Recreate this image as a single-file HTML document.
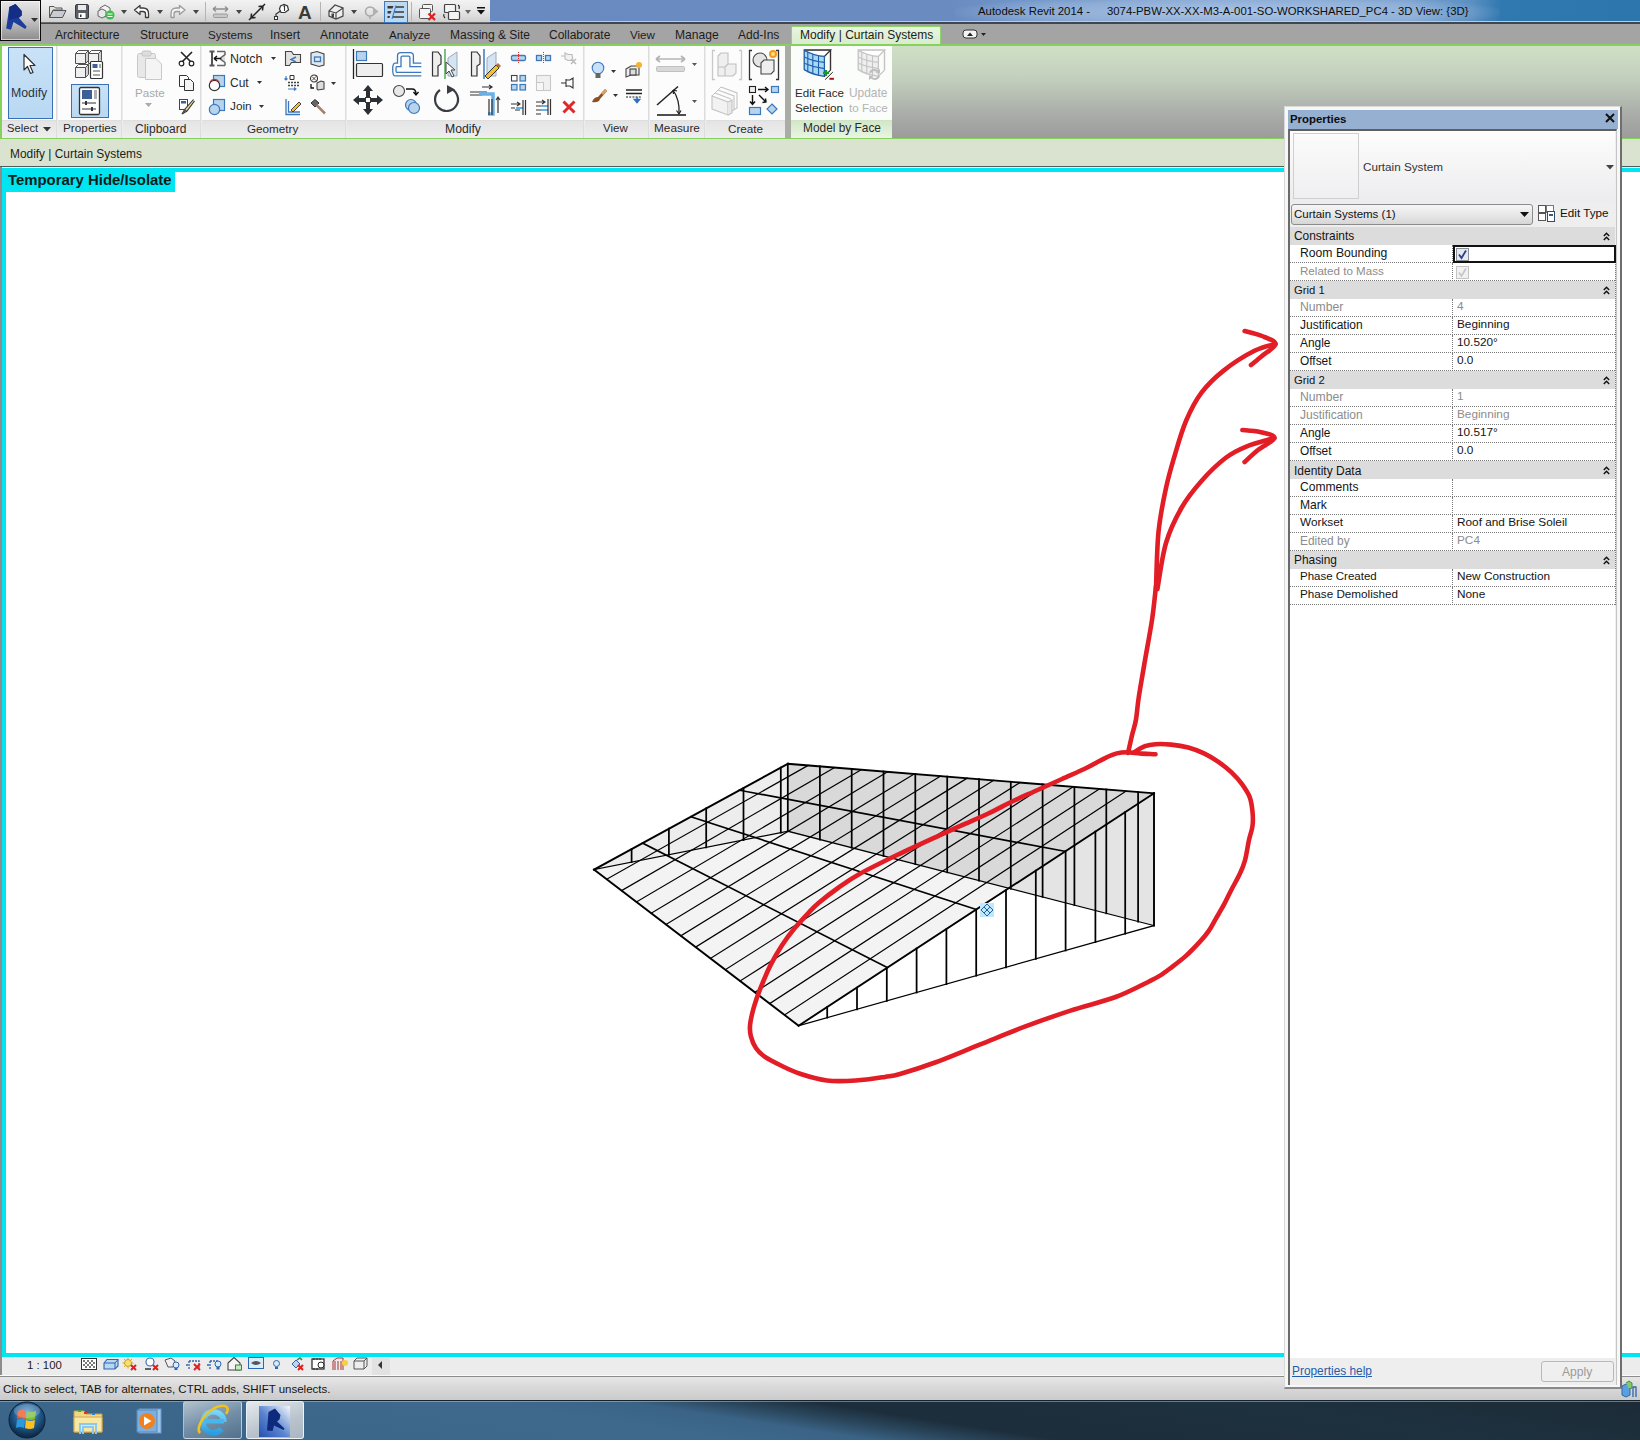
<!DOCTYPE html>
<html><head><meta charset="utf-8">
<style>
*{margin:0;padding:0;box-sizing:border-box}
html,body{width:1640px;height:1450px;overflow:hidden;background:#fff;font-family:"Liberation Sans",sans-serif;position:relative}
.a{position:absolute}
.t{position:absolute;white-space:nowrap;font-size:11.8px;color:#1c1c1c;line-height:1}
.g{color:#8a8a8a}
.pt{position:absolute;white-space:nowrap;font-size:11.8px;color:#2a2a2a;line-height:1}
svg{position:absolute;overflow:visible}
.row{position:absolute;left:1290px;width:325px;height:18px;border-bottom:1px dotted #7a7a7a}
.hdr{position:absolute;left:1290px;width:325px;height:18px;background:#dcdcdc}
.cv{position:absolute;left:1452px;width:1px;height:18px;border-left:1px dotted #7a7a7a}
</style></head><body>
<!-- ===== title bar ===== -->
<div class="a" style="left:0;top:0;width:1640px;height:22px;background:linear-gradient(90deg,#6486bf 0,#6a8bc1 40%,#6a8bc0 58%,#7095c8 62%,#7aa0cf 86%,#5a8fc2 89.8%,#3079b0 91.5%,#2c76ad 100%)"></div>
<div class="a" style="left:955px;top:0;width:545px;height:22px;background:radial-gradient(ellipse 52% 80% at 50% 55%,rgba(215,230,248,.55),rgba(215,230,248,.25) 70%,rgba(215,230,248,0))"></div>
<div class="a" style="left:0;top:21px;width:1640px;height:1px;background:#b8cbe6"></div>
<div class="a" style="left:0;top:22px;width:1640px;height:2px;background:#3d4651"></div>
<div class="t" style="left:978px;top:6px;font-size:11.4px;color:#0e0e0e">Autodesk Revit 2014 -</div>
<div class="t" style="left:1107px;top:6px;font-size:11.35px;color:#0e0e0e">3074-PBW-XX-XX-M3-A-001-SO-WORKSHARED_PC4 - 3D View: {3D}</div>
<!-- QAT -->
<div class="a" style="left:40px;top:0;width:450px;height:23px;background:linear-gradient(#f3f3f3,#e6e6e6 50%,#cfcfcf);border-bottom:1px solid #6c6c6c"></div>
<div class="a" style="left:205px;top:2px;width:1px;height:19px;background:#b4b4b4"></div>
<div class="a" style="left:320px;top:2px;width:1px;height:19px;background:#b4b4b4"></div>
<div class="a" style="left:411px;top:2px;width:1px;height:19px;background:#b4b4b4"></div>
<div class="a" style="left:384px;top:1px;width:24px;height:22px;background:#bcd9f3;border:1px solid #3d79bd"></div>
<!-- ===== tab row ===== -->
<div class="a" style="left:0;top:24px;width:1640px;height:21px;background:#a4a4a4"></div>
<div class="t" style="left:55px;top:29px;font-size:12.1px">Architecture</div>
<div class="t" style="left:140px;top:29px;font-size:12px">Structure</div>
<div class="t" style="left:208px;top:29px;font-size:11.6px">Systems</div>
<div class="t" style="left:270px;top:29px;font-size:12px">Insert</div>
<div class="t" style="left:320px;top:29px;font-size:12.2px">Annotate</div>
<div class="t" style="left:389px;top:29px;font-size:11.6px">Analyze</div>
<div class="t" style="left:450px;top:29px;font-size:12px">Massing &amp; Site</div>
<div class="t" style="left:549px;top:29px;font-size:12px">Collaborate</div>
<div class="t" style="left:630px;top:29px;font-size:11.6px">View</div>
<div class="t" style="left:675px;top:29px;font-size:12.1px">Manage</div>
<div class="t" style="left:738px;top:29px;font-size:12px">Add-Ins</div>
<div class="a" style="left:791px;top:26px;width:150px;height:20px;background:linear-gradient(#e9f5e2,#d6ecca);border:1px solid #8fd46b;border-bottom:none;border-radius:2px 2px 0 0"></div>
<div class="t" style="left:800px;top:29px;font-size:12px">Modify | Curtain Systems</div>
<svg style="left:962px;top:29px" width="30" height="12"><rect x="1" y="1" width="14" height="8" rx="3" fill="#f4f4f4" stroke="#333" stroke-width="1"/><path d="M5,7 L8,3.5 L11,7Z" fill="#222"/><path d="M19,4 L24,4 L21.5,7Z" fill="#222"/></svg>
<!-- ===== ribbon ===== -->
<div class="a" style="left:0;top:44px;width:1640px;height:2px;background:#86d05e"></div>
<div class="a" style="left:0;top:46px;width:1640px;height:92px;background:linear-gradient(#cfe0c6 0%,#c3cfbd 35%,#a9aca8 75%,#9c9c9c 100%)"></div>
<div class="a" style="left:0;top:46px;width:791px;height:92px;background:#fcfcfc"></div>
<div class="a" style="left:0;top:45px;width:2px;height:94px;background:#86d05e"></div>
<div class="a" style="left:0;top:120px;width:785px;height:18px;background:linear-gradient(#e4e4e4,#eeeeee);border-top:1px solid #dedede"></div>
<div class="a" style="left:785px;top:46px;width:6px;height:92px;background:#a9ada6"></div>
<div class="a" style="left:791px;top:46px;width:101px;height:92px;background:#fbfdfa"></div>
<div class="a" style="left:791px;top:120px;width:101px;height:18px;background:linear-gradient(#d2e7c8,#e9f5e2);border-top:1px solid #cfe3c5"></div>
<!-- separators -->
<div class="a" style="left:56px;top:46px;width:2px;height:92px;background:linear-gradient(90deg,#d5d5d5,#f4f4f4)"></div>
<div class="a" style="left:121px;top:46px;width:2px;height:92px;background:linear-gradient(90deg,#d5d5d5,#f4f4f4)"></div>
<div class="a" style="left:200px;top:46px;width:2px;height:92px;background:linear-gradient(90deg,#d5d5d5,#f4f4f4)"></div>
<div class="a" style="left:345px;top:46px;width:2px;height:92px;background:linear-gradient(90deg,#d5d5d5,#f4f4f4)"></div>
<div class="a" style="left:583px;top:46px;width:2px;height:92px;background:linear-gradient(90deg,#d5d5d5,#f4f4f4)"></div>
<div class="a" style="left:648px;top:46px;width:2px;height:92px;background:linear-gradient(90deg,#d5d5d5,#f4f4f4)"></div>
<div class="a" style="left:704px;top:46px;width:2px;height:92px;background:linear-gradient(90deg,#d5d5d5,#f4f4f4)"></div>
<div class="a" style="left:0;top:138px;width:1640px;height:1px;background:#86d05e"></div>
<div class="a" style="left:0;top:45px;width:2px;height:94px;background:#86d05e"></div>
<!-- panel titles -->
<div class="t" style="left:7px;top:123px;font-size:11.2px;color:#2a2a2a">Select</div>
<svg style="left:43px;top:127px" width="8" height="5"><path d="M0,0 L8,0 L4,4.5Z" fill="#333"/></svg>
<div class="t" style="left:63px;top:123px;font-size:11.8px;color:#2a2a2a">Properties</div>
<div class="t" style="left:135px;top:123px;font-size:12px;color:#2a2a2a">Clipboard</div>
<div class="t" style="left:247px;top:123px;font-size:11.7px;color:#2a2a2a">Geometry</div>
<div class="t" style="left:445px;top:123px;font-size:12.2px;color:#2a2a2a">Modify</div>
<div class="t" style="left:603px;top:123px;font-size:11.5px;color:#2a2a2a">View</div>
<div class="t" style="left:654px;top:123px;font-size:11.8px;color:#2a2a2a">Measure</div>
<div class="t" style="left:728px;top:123px;font-size:11.7px;color:#2a2a2a">Create</div>
<div class="t" style="left:803px;top:123px;font-size:11.9px;color:#2a2a2a">Model by Face</div>
<!-- button labels -->
<div class="a" style="left:8px;top:47px;width:45px;height:72px;background:linear-gradient(#c9e2f7,#b9d8f2);border:1px solid #3a70b6"></div>
<div class="t" style="left:11px;top:87px;font-size:12.3px;color:#2a3440">Modify</div>
<div class="a" style="left:71px;top:84px;width:38px;height:34px;background:linear-gradient(#c9e2f7,#b9d8f2);border:1px solid #3a70b6"></div>
<div class="t g" style="left:135px;top:87px;font-size:11.6px;color:#a9a9a9">Paste</div>
<div class="t" style="left:230px;top:53px;font-size:12.4px;color:#2a2a2a">Notch</div>
<div class="t" style="left:230px;top:77px;font-size:12px;color:#2a2a2a">Cut</div>
<div class="t" style="left:230px;top:101px;font-size:11.8px;color:#2a2a2a">Join</div>
<div class="t" style="left:795px;top:87px;font-size:11.6px;color:#2a2a2a">Edit Face</div>
<div class="t" style="left:795px;top:102px;font-size:11.7px;color:#2a2a2a">Selection</div>
<div class="t" style="left:849px;top:88px;font-size:11.9px;color:#b4b4b4">Update</div>
<div class="t" style="left:849px;top:102px;font-size:11.6px;color:#b4b4b4">to Face</div>
<!-- ===== options bar ===== -->
<div class="a" style="left:0;top:139px;width:1640px;height:28px;background:#d9e3d0"></div>
<div class="a" style="left:0;top:166px;width:1640px;height:2px;background:#4e5c5c"></div>
<div class="t" style="left:10px;top:149px;font-size:11.9px;color:#1c1c1c">Modify | Curtain Systems</div>
<!-- ===== view ===== -->
<div class="a" style="left:0;top:167px;width:1640px;height:209px;background:#f0f0f0"></div>
<div class="a" style="left:0;top:1340px;width:1640px;height:36px;background:#ececec"></div>
<div class="a" style="left:0;top:167px;width:2px;height:1208px;background:#8c8c8c"></div>
<div class="a" style="left:2px;top:168px;width:1638px;height:1189px;background:#00e5f2"></div>
<div class="a" style="left:6px;top:172px;width:1634px;height:1181px;background:#fff"></div>
<div class="a" style="left:6px;top:172px;width:169px;height:20px;background:#00e5f2"></div>
<div class="t" style="left:8px;top:173px;font-weight:bold;font-size:14.9px;color:#0c1a1a">Temporary Hide/Isolate</div>
<!-- view control bar -->
<div class="t" style="left:27px;top:1360px;font-size:11.4px;color:#1c1c1c">1 : 100</div>
<div class="a" style="left:372px;top:1358px;width:18px;height:17px;background:#e2e2e2"></div>
<!-- status bar -->
<div class="a" style="left:0;top:1375px;width:1640px;height:1px;background:#fafafa"></div><div class="a" style="left:0;top:1376px;width:1640px;height:24px;background:linear-gradient(#e6e6e6,#dadada 40%,#cdcdcd 90%,#c9ccd0);border-top:1px solid #8c8c8c"></div>
<div class="t" style="left:3px;top:1384px;font-size:11.5px;color:#141414">Click to select, TAB for alternates, CTRL adds, SHIFT unselects.</div>
<!-- ===== taskbar ===== -->
<div class="a" style="left:0;top:1400px;width:1640px;height:40px;background:linear-gradient(8.75deg,#3a6588 0%,#3e698d 38%,#3a6386 46%,#2a465c 51%,#1c2d3b 56%,#1e313f 78%,#1c2b37 100%)"></div>
<div class="a" style="left:0;top:1400px;width:1640px;height:1px;background:#16222c"></div>
<div class="a" style="left:0;top:1401px;width:1640px;height:1px;background:rgba(190,215,235,.45)"></div>
<div class="a" style="left:183px;top:1401px;width:59px;height:38px;border:1px solid rgba(220,235,250,.6);border-radius:3px;background:linear-gradient(160deg,#b4c2ce,#7490a8 50%,#52708c)"></div>
<div class="a" style="left:246px;top:1401px;width:58px;height:38px;border:1px solid rgba(240,245,252,.9);border-radius:3px;background:linear-gradient(160deg,#e6eaee,#b9c3cc 60%,#a9b6c2)"></div>

<svg class="a" style="left:0;top:0" width="1640" height="1450" viewBox="0 0 1640 1450">
<polygon points="594.0,869.6 798.6,1025.7 1154.0,793.3 787.8,763.8" fill="#f3f3f3"/>
<polygon points="787.8,763.8 1154.0,793.3 1154.0,925.6 787.8,831.2" fill="#d9d9d9"/>
<polygon points="594.0,869.6 787.8,763.8 787.8,831.2" fill="#ededed"/>
<polygon points="798.6,1025.7 1154.0,793.3 1154.0,925.6" fill="#ffffff" fill-opacity="0.3"/>
<g stroke-linecap="square"><line x1="631.6" y1="849.1" x2="631.6" y2="862.1" stroke="#000" stroke-width="1.75"/><line x1="668.9" y1="828.7" x2="668.9" y2="854.8" stroke="#000" stroke-width="1.75"/><line x1="706.2" y1="808.3" x2="706.2" y2="847.4" stroke="#000" stroke-width="1.75"/><line x1="743.5" y1="788.0" x2="743.5" y2="840.0" stroke="#000" stroke-width="1.75"/><line x1="780.8" y1="767.6" x2="780.8" y2="832.6" stroke="#000" stroke-width="1.75"/><line x1="787.8" y1="763.8" x2="787.8" y2="831.2" stroke="#000" stroke-width="1.75"/><line x1="819.9" y1="766.4" x2="819.9" y2="839.5" stroke="#000" stroke-width="1.75"/><line x1="851.7" y1="768.9" x2="851.7" y2="847.7" stroke="#000" stroke-width="1.75"/><line x1="883.5" y1="771.5" x2="883.5" y2="855.9" stroke="#000" stroke-width="1.75"/><line x1="915.3" y1="774.1" x2="915.3" y2="864.1" stroke="#000" stroke-width="1.75"/><line x1="947.2" y1="776.6" x2="947.2" y2="872.3" stroke="#000" stroke-width="1.75"/><line x1="979.0" y1="779.2" x2="979.0" y2="880.5" stroke="#000" stroke-width="1.75"/><line x1="1010.8" y1="781.8" x2="1010.8" y2="888.7" stroke="#000" stroke-width="1.75"/><line x1="1042.6" y1="784.3" x2="1042.6" y2="896.9" stroke="#000" stroke-width="1.75"/><line x1="1074.4" y1="786.9" x2="1074.4" y2="905.1" stroke="#000" stroke-width="1.75"/><line x1="1106.3" y1="789.5" x2="1106.3" y2="913.3" stroke="#000" stroke-width="1.75"/><line x1="1138.1" y1="792.0" x2="1138.1" y2="921.5" stroke="#000" stroke-width="1.75"/><line x1="827.2" y1="1007.0" x2="827.2" y2="1017.6" stroke="#000" stroke-width="1.75"/><line x1="857.0" y1="987.5" x2="857.0" y2="1009.3" stroke="#000" stroke-width="1.75"/><line x1="886.8" y1="968.0" x2="886.8" y2="1000.9" stroke="#000" stroke-width="1.75"/><line x1="916.6" y1="948.5" x2="916.6" y2="992.5" stroke="#000" stroke-width="1.75"/><line x1="946.4" y1="929.1" x2="946.4" y2="984.1" stroke="#000" stroke-width="1.75"/><line x1="976.2" y1="909.6" x2="976.2" y2="975.7" stroke="#000" stroke-width="1.75"/><line x1="1006.0" y1="890.1" x2="1006.0" y2="967.3" stroke="#000" stroke-width="1.75"/><line x1="1035.8" y1="870.6" x2="1035.8" y2="958.9" stroke="#000" stroke-width="1.75"/><line x1="1065.6" y1="851.1" x2="1065.6" y2="950.5" stroke="#000" stroke-width="1.75"/><line x1="1095.4" y1="831.6" x2="1095.4" y2="942.1" stroke="#000" stroke-width="1.75"/><line x1="1125.2" y1="812.1" x2="1125.2" y2="933.7" stroke="#000" stroke-width="1.75"/><line x1="594.0" y1="869.6" x2="787.8" y2="831.2" stroke="#000" stroke-width="1.2"/><line x1="787.8" y1="831.2" x2="1154.0" y2="925.6" stroke="#000" stroke-width="1.2"/><line x1="606.7" y1="879.3" x2="808.1" y2="765.4" stroke="#000" stroke-width="1.2"/><line x1="621.6" y1="890.6" x2="834.6" y2="767.6" stroke="#000" stroke-width="1.2"/><line x1="636.4" y1="901.9" x2="861.1" y2="769.7" stroke="#000" stroke-width="1.2"/><line x1="651.2" y1="913.2" x2="887.6" y2="771.8" stroke="#000" stroke-width="1.2"/><line x1="666.0" y1="924.5" x2="914.1" y2="774.0" stroke="#000" stroke-width="1.2"/><line x1="680.8" y1="935.8" x2="940.6" y2="776.1" stroke="#000" stroke-width="1.2"/><line x1="695.6" y1="947.1" x2="967.1" y2="778.2" stroke="#000" stroke-width="1.2"/><line x1="710.4" y1="958.4" x2="993.6" y2="780.4" stroke="#000" stroke-width="1.2"/><line x1="725.3" y1="969.7" x2="1020.1" y2="782.5" stroke="#000" stroke-width="1.2"/><line x1="740.1" y1="981.0" x2="1046.6" y2="784.6" stroke="#000" stroke-width="1.2"/><line x1="754.9" y1="992.3" x2="1073.1" y2="786.8" stroke="#000" stroke-width="1.2"/><line x1="769.7" y1="1003.6" x2="1099.6" y2="788.9" stroke="#000" stroke-width="1.2"/><line x1="784.5" y1="1014.9" x2="1126.1" y2="791.1" stroke="#000" stroke-width="1.2"/><line x1="642.5" y1="843.1" x2="887.5" y2="967.6" stroke="#000" stroke-width="1.65"/><line x1="690.9" y1="816.7" x2="976.3" y2="909.5" stroke="#000" stroke-width="1.65"/><line x1="739.3" y1="790.2" x2="1065.2" y2="851.4" stroke="#000" stroke-width="1.65"/><line x1="594.0" y1="869.6" x2="787.8" y2="763.8" stroke="#000" stroke-width="1.9"/><line x1="787.8" y1="763.8" x2="1154.0" y2="793.3" stroke="#000" stroke-width="1.9"/><line x1="1154.0" y1="793.3" x2="1154.0" y2="925.6" stroke="#000" stroke-width="1.9"/><line x1="1154.0" y1="925.6" x2="798.6" y2="1025.7" stroke="#000" stroke-width="1.2"/><line x1="798.6" y1="1025.7" x2="594.0" y2="869.6" stroke="#000" stroke-width="1.9"/><line x1="798.6" y1="1025.7" x2="1154.0" y2="793.3" stroke="#000" stroke-width="1.9"/></g>
<g transform="translate(987,910) rotate(0)"><rect x="-7" y="-7" width="14" height="14" fill="#bfe9fb"/><path d="M0,-6 L6,0 L0,6 L-6,0 Z M-3,-3 L3,3 M3,-3 L-3,3" fill="none" stroke="#2060b0" stroke-width="1"/></g>
<path d="M1156.0,589.0 C1156.4,579.5 1156.8,548.8 1158.5,532.0 C1160.2,515.2 1163.2,500.9 1166.0,488.0 C1168.8,475.1 1171.7,465.7 1175.0,454.5 C1178.3,443.3 1181.6,431.3 1186.0,421.0 C1190.4,410.7 1195.2,401.1 1201.5,392.7 C1207.8,384.3 1214.8,377.6 1223.6,370.6 C1232.4,363.6 1245.8,355.2 1254.5,350.8 C1263.2,346.4 1272.0,345.1 1275.5,344.0" fill="none" stroke="#e21d26" stroke-width="4.6" stroke-linecap="round" stroke-linejoin="round"/>
<path d="M1244.6,331.0 C1247.5,331.8 1256.8,333.8 1262.0,336.0 C1267.2,338.2 1275.5,340.7 1275.5,344.0 C1275.5,347.3 1266.1,352.5 1262.0,356.0 C1257.9,359.5 1252.8,363.5 1251.0,365.0" fill="none" stroke="#e21d26" stroke-width="4.6" stroke-linecap="round" stroke-linejoin="round"/>
<path d="M1157.4,589.0 C1158.8,581.3 1162.0,556.6 1166.0,543.0 C1170.0,529.4 1175.8,517.8 1181.7,507.5 C1187.6,497.2 1194.2,489.3 1201.5,481.0 C1208.8,472.7 1218.4,463.5 1225.8,457.8 C1233.2,452.1 1237.6,450.1 1245.7,446.8 C1253.8,443.5 1269.6,439.5 1274.4,438.0" fill="none" stroke="#e21d26" stroke-width="4.6" stroke-linecap="round" stroke-linejoin="round"/>
<path d="M1242.4,430.0 C1245.3,430.3 1254.7,430.7 1260.0,432.0 C1265.3,433.3 1274.7,435.0 1274.4,438.0 C1274.1,441.0 1263.0,446.0 1258.0,450.0 C1253.0,454.0 1246.8,460.0 1244.6,462.0" fill="none" stroke="#e21d26" stroke-width="4.6" stroke-linecap="round" stroke-linejoin="round"/>
<path d="M1156.0,586.0 C1155.3,591.7 1154.0,606.7 1152.0,620.0 C1150.0,633.3 1146.2,652.8 1144.0,666.0 C1141.8,679.2 1139.8,690.0 1138.5,699.0 C1137.2,708.0 1137.0,713.9 1135.9,720.0 C1134.8,726.1 1133.2,730.2 1131.9,735.7 C1130.6,741.2 1128.7,750.1 1128.0,753.0" fill="none" stroke="#e21d26" stroke-width="4.6" stroke-linecap="round" stroke-linejoin="round"/>
<path d="M1134.5,752.0 C1136.2,751.0 1141.5,747.5 1145.0,746.2 C1148.5,744.9 1151.1,744.5 1155.5,744.2 C1159.9,743.9 1165.7,744.1 1171.2,744.6 C1176.7,745.1 1182.8,746.0 1188.3,747.5 C1193.8,749.0 1199.0,751.0 1204.0,753.4 C1209.0,755.8 1213.8,758.7 1218.4,761.9 C1223.0,765.1 1227.6,768.7 1231.5,772.4 C1235.4,776.1 1239.0,780.1 1242.0,784.2 C1245.0,788.4 1248.0,792.7 1249.8,797.3 C1251.5,801.9 1252.0,806.9 1252.5,811.7 C1253.0,816.5 1253.1,821.3 1252.5,826.0 C1251.9,830.7 1250.3,834.2 1249.0,840.0 C1247.7,845.8 1246.5,855.0 1244.9,860.7 C1243.4,866.4 1242.0,869.3 1239.7,874.1 C1237.5,878.9 1234.0,884.7 1231.4,889.7 C1228.8,894.7 1226.8,899.4 1224.2,904.2 C1221.6,909.0 1218.5,914.1 1215.9,918.6 C1213.3,923.1 1211.4,927.1 1208.6,931.1 C1205.8,935.1 1203.1,938.3 1199.3,942.4 C1195.5,946.5 1190.7,951.6 1185.9,955.9 C1181.1,960.2 1174.6,965.0 1170.3,968.3 C1166.0,971.6 1163.5,973.5 1160.0,975.6 C1156.5,977.8 1156.9,977.6 1149.5,981.2 C1142.1,984.8 1128.8,992.1 1115.6,997.0 C1102.4,1001.9 1085.5,1005.7 1070.5,1010.6 C1055.5,1015.5 1040.4,1020.8 1025.4,1026.4 C1010.4,1032.0 995.3,1038.4 980.3,1044.4 C965.2,1050.4 948.5,1057.6 935.1,1062.5 C921.7,1067.4 908.4,1071.6 900.0,1074.0 C891.6,1076.4 892.2,1075.8 884.8,1076.9 C877.4,1078.0 865.4,1079.9 855.8,1080.5 C846.1,1081.1 836.1,1081.6 826.9,1080.5 C817.7,1079.4 808.5,1076.5 800.8,1074.0 C793.1,1071.5 786.5,1068.2 780.5,1065.3 C774.5,1062.4 768.7,1059.6 764.6,1056.7 C760.5,1053.8 758.2,1051.4 755.9,1048.0 C753.6,1044.6 751.9,1040.3 750.9,1036.4 C749.9,1032.5 749.6,1029.6 750.1,1024.8 C750.6,1020.0 752.1,1013.4 753.8,1007.4 C755.5,1001.4 757.5,995.6 760.3,988.6 C763.1,981.6 766.8,972.6 770.4,965.4 C774.0,958.2 777.9,951.5 782.0,945.2 C786.1,938.9 790.6,933.1 795.0,927.8 C799.4,922.5 804.2,917.4 808.1,913.3 C812.0,909.2 813.5,907.2 818.5,903.0 C823.5,898.8 831.2,892.8 838.0,888.0 C844.8,883.2 849.7,879.5 859.5,874.0 C869.3,868.5 883.6,861.5 897.0,855.0 C910.4,848.5 928.8,840.2 940.0,835.1 C951.2,830.0 956.3,827.8 964.4,824.1 C972.5,820.5 980.7,817.1 988.8,813.2 C996.9,809.4 1005.1,804.9 1013.2,801.0 C1021.3,797.1 1029.5,793.7 1037.6,790.0 C1045.7,786.3 1053.9,782.7 1062.0,779.0 C1070.1,775.3 1079.2,771.5 1086.3,768.0 C1093.4,764.5 1099.5,760.7 1104.6,758.3 C1109.7,755.9 1113.1,754.4 1116.8,753.4 C1120.5,752.4 1122.7,752.2 1126.6,752.2 C1130.5,752.2 1135.2,753.0 1140.0,753.4 C1144.8,753.8 1152.9,754.1 1155.5,754.3" fill="none" stroke="#e21d26" stroke-width="4.6" stroke-linecap="round" stroke-linejoin="round"/>
</svg>
<!-- ===== R logo ===== -->
<div class="a" style="left:0;top:0;width:41px;height:41px;background:linear-gradient(#e6e6e6,#c8c8c8 45%,#8c8c8c);border:1px solid #0a0a0a;box-shadow:inset 0 0 0 1px rgba(255,255,255,.6)"></div>
<svg style="left:0;top:0" width="41" height="41"><path d="M9.3,7 L15.5,4 L21.7,11 L21.7,15.5 L18.8,17.8 L26.7,26.7 L25.2,29 L13.5,22 L11,29.8 L6.2,28.6 Z" fill="#1d3c9c"/><path d="M9.3,7 L15.5,4 L21.7,11 L21.7,15.5 L18.8,17.8 L13,19 L9,20Z" fill="#142e86"/><path d="M31,18 L38,18 L34.5,22Z" fill="#333"/></svg>
<!-- ===== QAT icons ===== -->
<svg style="left:48px;top:3px" width="20" height="17"><path d="M1.5,3.5 L6,3.5 L7.5,5 L14,5 L14,7 L5,7 L1.5,14.5Z" fill="#e4e4e4" stroke="#555" stroke-width="1"/><path d="M5,7.5 L18,7.5 L14.5,14.5 L1.5,14.5Z" fill="#c9cdd3" stroke="#555" stroke-width="1"/></svg>
<svg style="left:74px;top:3px" width="17" height="17"><rect x="1.5" y="1.5" width="13" height="14" rx="1.5" fill="#5a5f66" stroke="#3a3d42"/><rect x="4" y="2" width="8" height="5" fill="#e8eaee"/><rect x="4.5" y="10" width="7" height="5" fill="#fff"/><rect x="6" y="11.5" width="1.5" height="2.5" fill="#333"/></svg>
<svg style="left:97px;top:3px" width="20" height="18"><path d="M3,5 L8,2 L13,5 L13,11 L8,14 L3,11Z" fill="#f2f2f2" stroke="#666"/><path d="M1,8 L5,6 L9,8 L9,13 L5,15 L1,13Z" fill="#e9e9e9" stroke="#666"/><circle cx="13" cy="12" r="4.5" fill="#3bc04a"/><path d="M10.5,11 h5 M10.5,13.5 h5" stroke="#fff" stroke-width="1.2"/></svg>
<svg style="left:121px;top:10px" width="7" height="5"><path d="M0,0 L6,0 L3,4Z" fill="#444"/></svg>
<svg style="left:133px;top:4px" width="18" height="15"><path d="M1.5,6 L7,1.5 L7,4 L10,4 Q15.5,4 15.5,9.5 L15.5,13.5 L12.5,13.5 L12.5,10 Q12.5,7.5 10,7.5 L7,7.5 L7,10.5Z" fill="#fff" stroke="#3c3c3c" stroke-width="1.3" stroke-linejoin="round"/></svg>
<svg style="left:157px;top:10px" width="7" height="5"><path d="M0,0 L6,0 L3,4Z" fill="#444"/></svg>
<svg style="left:169px;top:4px" width="18" height="15"><path d="M16,6 L10.5,1.5 L10.5,4 L7.5,4 Q2,4 2,9.5 L2,13.5 L5,13.5 L5,10 Q5,7.5 7.5,7.5 L10.5,7.5 L10.5,10.5Z" fill="#f4f4f4" stroke="#9a9a9a" stroke-width="1.3" stroke-linejoin="round"/></svg>
<svg style="left:193px;top:10px" width="7" height="5"><path d="M0,0 L6,0 L3,4Z" fill="#444"/></svg>
<svg style="left:212px;top:5px" width="18" height="14"><path d="M1,4 L16,4 M1,4 L4,1.5 M1,4 L4,6.5 M16,4 L13,1.5 M16,4 L13,6.5" stroke="#8e8e8e" stroke-width="1.3" fill="none"/><rect x="1.5" y="9" width="14" height="3.5" rx="1" fill="#c8c8c8" stroke="#9a9a9a"/></svg>
<svg style="left:236px;top:10px" width="7" height="5"><path d="M0,0 L6,0 L3,4Z" fill="#444"/></svg>
<svg style="left:248px;top:3px" width="18" height="18"><path d="M3,15 L15,3 M3,15 L3.5,10.5 M3,15 L7.5,14.5 M15,3 L14.5,7.5 M15,3 L10.5,3.5 M1,17 L5,13 M13,5 L17,1" stroke="#222" stroke-width="1.5" fill="none"/></svg>
<svg style="left:273px;top:3px" width="17" height="17"><path d="M7.5,3 L11,1.5 L14.5,3 L15.5,7 L12,9.5 L8,9.5 L6.5,6Z" fill="#fff" stroke="#333" stroke-width="1.2"/><path d="M10.5,3.5 L11.5,3 L11.5,8" stroke="#333" stroke-width="1.1" fill="none"/><path d="M7.5,8 L3,11 L3,14.5" stroke="#333" stroke-width="1.2" fill="none"/><rect x="1.5" y="13.5" width="3" height="3" fill="#fff" stroke="#333"/></svg>
<div class="t" style="left:298px;top:3px;font-size:19px;font-weight:bold;color:#3a3a3a">A</div>
<svg style="left:327px;top:3px" width="18" height="17"><path d="M2,8 L8,2 L16,5 L16,13 L9,16 L2,13Z" fill="#eee" stroke="#444" stroke-width="1.2"/><path d="M2,8 L9,10 L16,5 M9,10 L9,16" stroke="#444" stroke-width="1.1" fill="none"/><rect x="4.5" y="10.5" width="2.5" height="4" fill="#444"/></svg>
<svg style="left:351px;top:10px" width="7" height="5"><path d="M0,0 L6,0 L3,4Z" fill="#444"/></svg>
<svg style="left:364px;top:4px" width="16" height="16"><circle cx="6" cy="7.5" r="4.5" fill="none" stroke="#a8a8a8" stroke-width="1.5"/><path d="M9,3 L14.5,7.5 L9,12Z" fill="#b0b0b0"/><path d="M6,12 L6,15" stroke="#a8a8a8" stroke-width="1.3"/></svg>
<svg style="left:386px;top:4px" width="20" height="16"><path d="M1.5,2 h6 l-1,2.5 h-5z M1.5,7 h4 l-1,2.5 h-3z M1.5,12 h2.5 l-0.5,2 h-2z" fill="#3a3a3a"/><path d="M10,1.5 L6,15" stroke="#3a7fd0" stroke-width="1.1"/><path d="M10,3 h8 M8.5,8 h9.5 M7,13 h11" stroke="#3a3a3a" stroke-width="1.3"/></svg>
<svg style="left:418px;top:3px" width="20" height="18"><rect x="4.5" y="1.5" width="10" height="7" rx="1" fill="#f4f4f4" stroke="#555"/><rect x="1.5" y="5.5" width="11" height="10" rx="1" fill="#f4f4f4" stroke="#555"/><path d="M10.5,10.5 L17,17 M17,10.5 L10.5,17" stroke="#e02020" stroke-width="2.2"/></svg>
<svg style="left:442px;top:3px" width="20" height="18"><rect x="2.5" y="1.5" width="11" height="8" rx="1" fill="#f4f4f4" stroke="#444" stroke-width="1.2"/><rect x="6.5" y="8.5" width="11" height="8" rx="1" fill="#f4f4f4" stroke="#444" stroke-width="1.2"/><path d="M16,2 Q18,3 17,6 M2,11 Q1,13 3,15" stroke="#222" stroke-width="1.1" fill="none"/></svg>
<svg style="left:465px;top:10px" width="7" height="5"><path d="M0,0 L6,0 L3,4Z" fill="#666"/></svg>
<svg style="left:477px;top:7px" width="9" height="9"><rect x="0" y="0" width="8" height="1.5" fill="#111"/><path d="M0,3 L8,3 L4,7.5Z" fill="#111"/></svg>

<!-- ===== ribbon icons ===== -->
<!-- Modify cursor -->
<svg style="left:22px;top:53px" width="16" height="24"><path d="M2,1.5 L2,17 L5.5,13.5 L8.5,20.5 L11,19.5 L8,12.5 L13,12.5Z" fill="#fff" stroke="#333" stroke-width="1.2" stroke-linejoin="round"/></svg>
<!-- Properties big icon -->
<svg style="left:74px;top:49px" width="32" height="32"><path d="M1.5,4.5 h10 v10 h-10z" fill="#efefef"/><path d="M1.5,4.5 l3,-3 h10 l-3,3z" fill="#fbfbfb"/><path d="M11.5,4.5 l3,-3 v10 l-3,3z" fill="#cfcfcf"/><path d="M1.5,4.5 l3,-3 h10 v10 l-3,3 h-10z M1.5,4.5 h10 l3,-3 M11.5,4.5 v10" fill="none" stroke="#505050" stroke-width="1"/><path d="M14.5,4.5 h10 v10 h-10z" fill="#efefef"/><path d="M14.5,4.5 l3,-3 h10 l-3,3z" fill="#fbfbfb"/><path d="M24.5,4.5 l3,-3 v10 l-3,3z" fill="#cfcfcf"/><path d="M14.5,4.5 l3,-3 h10 v10 l-3,3 h-10z M14.5,4.5 h10 l3,-3 M24.5,4.5 v10" fill="none" stroke="#505050" stroke-width="1"/><path d="M1.5,18.5 h10 v10 h-10z" fill="#efefef"/><path d="M1.5,18.5 l3,-3 h10 l-3,3z" fill="#fbfbfb"/><path d="M11.5,18.5 l3,-3 v10 l-3,3z" fill="#cfcfcf"/><path d="M1.5,18.5 l3,-3 h10 v10 l-3,3 h-10z M1.5,18.5 h10 l3,-3 M11.5,18.5 v10" fill="none" stroke="#505050" stroke-width="1"/><rect x="16.5" y="12.5" width="12" height="17" rx="1" fill="#fff" stroke="#333" stroke-width="1.2"/><rect x="18.5" y="15" width="5" height="4" fill="#3d6098"/><rect x="25" y="15" width="2" height="4" fill="#aaa"/><path d="M19,22 h7 M19,26 h7" stroke="#555" stroke-width="1"/></svg>
<svg style="left:77px;top:86px" width="26" height="30"><rect x="2.5" y="1.5" width="20" height="27" rx="1.5" fill="#fff" stroke="#333" stroke-width="1.3"/><rect x="5" y="4" width="10" height="9" fill="#3c5f97"/><rect x="17" y="4" width="3" height="9" fill="#b0b0b0"/><path d="M5,17 h14 M5,23 h14" stroke="#333" stroke-width="1.2"/><rect x="8" y="15" width="2" height="4" fill="#333"/><rect x="14" y="21" width="2" height="4" fill="#333"/></svg>
<!-- Paste -->
<svg style="left:136px;top:49px" width="28" height="33"><rect x="1.5" y="4.5" width="18" height="24" rx="2" fill="#e8e8e8" stroke="#c8c8c8"/><rect x="6" y="2" width="9" height="5" rx="1.5" fill="#ddd" stroke="#c4c4c4"/><path d="M9.5,9.5 L20,9.5 L25.5,15 L25.5,30.5 L9.5,30.5Z" fill="#f4f4f4" stroke="#c8c8c8"/></svg>
<svg style="left:145px;top:103px" width="8" height="5"><path d="M0,0 L7,0 L3.5,4Z" fill="#aaa"/></svg>
<!-- scissors / copy / match -->
<svg style="left:178px;top:50px" width="18" height="17"><path d="M3,2 L14,13 M14,2 L3,13" stroke="#222" stroke-width="1.6"/><circle cx="3.5" cy="13.5" r="2.3" fill="#fff" stroke="#222" stroke-width="1.2"/><circle cx="13.5" cy="13.5" r="2.3" fill="#fff" stroke="#222" stroke-width="1.2"/></svg>
<svg style="left:178px;top:74px" width="18" height="18"><path d="M1.5,1.5 h7 l2,2 v9 h-9z" fill="#fafafa" stroke="#333"/><path d="M6.5,5.5 h6 l3,3 v8 h-9z" fill="#f4f4f4" stroke="#333"/></svg>
<svg style="left:178px;top:98px" width="18" height="18"><rect x="1.5" y="1.5" width="8" height="10" fill="#fff" stroke="#444"/><rect x="3" y="3" width="5" height="2.5" fill="#3c5f97"/><path d="M15.5,1.5 L7,11 L4,16 L9,13 L16.5,3" fill="#e8d7a0" stroke="#333" stroke-width="1.1"/><path d="M4,16 L7,11 L9,13Z" fill="#555"/></svg>
<!-- Geometry: notch/cut/join -->
<svg style="left:208px;top:50px" width="19" height="17"><path d="M1.5,1.5 h5 M4,1.5 v14 M1.5,15.5 h5" stroke="#555" stroke-width="2" fill="none"/><path d="M9,1.5 h8 M17,1.5 v3 l-4,3 v2 l4,3 v3 M9,15.5 h8" stroke="#666" stroke-width="1.5" fill="#ddd"/><path d="M13,8.5 L6,8.5 M6,8.5 L9,6 M6,8.5 L9,11" stroke="#111" stroke-width="1.4" fill="none"/></svg>
<svg style="left:271px;top:57px" width="6" height="4"><path d="M0,0 L5,0 L2.5,3Z" fill="#333"/></svg>
<svg style="left:208px;top:74px" width="19" height="18"><rect x="5.5" y="1.5" width="11" height="11" fill="#b8d4ec" stroke="#3b78bd" stroke-width="1.2"/><circle cx="6.5" cy="11.5" r="5.2" fill="#fff" stroke="#333" stroke-width="1.2"/><path d="M2,8 A5.2,5.2 0 0 1 11,8" stroke="#e02020" stroke-width="1.2" fill="none"/></svg>
<svg style="left:257px;top:81px" width="6" height="4"><path d="M0,0 L5,0 L2.5,3Z" fill="#333"/></svg>
<svg style="left:208px;top:98px" width="19" height="18"><rect x="5.5" y="1.5" width="11" height="11" fill="#b8d4ec" stroke="#3b78bd" stroke-width="1.2"/><circle cx="6.5" cy="11.5" r="5.2" fill="#b8d4ec" stroke="#3b78bd" stroke-width="1.2"/></svg>
<svg style="left:259px;top:105px" width="6" height="4"><path d="M0,0 L5,0 L2.5,3Z" fill="#333"/></svg>
<svg style="left:284px;top:50px" width="18" height="18"><path d="M1.5,1.5 h6 l2,3 h7 v8 h-9 l-2,3 h-4z" fill="#e2e2e2" stroke="#444" stroke-width="1.1"/><path d="M12,7 L7,9.5 L12,12" stroke="#3b78bd" stroke-width="1.4" fill="none"/></svg>
<svg style="left:309px;top:50px" width="18" height="18"><path d="M2,3 L8,1.5 L15,4 L15,15 L10,16.5 L2,14Z" fill="#dde8f2" stroke="#444" stroke-width="1.1"/><rect x="5.5" y="7" width="6" height="4.5" fill="none" stroke="#3b78bd" stroke-width="1.3"/></svg>
<svg style="left:284px;top:74px" width="18" height="18"><path d="M2,2 v4 M0.5,4.5 L2,6 L3.5,4.5" stroke="#3b78bd" stroke-width="1.1" fill="none"/><path d="M6,1.5 h4 v4 h-4z" fill="none" stroke="#333" stroke-width="1"/><path d="M4,8.5 h12 M4,11.5 h12" stroke="#444" stroke-width="1.5" stroke-dasharray="2,1"/><path d="M4,15 h8 M10,13.5 L12,15 L10,16.5" stroke="#3b78bd" stroke-width="1.1" fill="none"/></svg>
<svg style="left:309px;top:74px" width="28" height="18"><circle cx="5" cy="4.5" r="3.5" fill="#fff" stroke="#333" stroke-width="1.1"/><path d="M3,2.5 L7,6.5 M7,2.5 L3,6.5" stroke="#333" stroke-width="0.9"/><path d="M2,10 L2,14 L5,14" stroke="#111" stroke-width="1.3" fill="none"/><path d="M8,9 L12,7 L15,8 L15,15 L9,16 L8,15Z" fill="#ddd" stroke="#444" stroke-width="1.1"/><path d="M22,8 L27,8 L24.5,11Z" fill="#333"/></svg>
<svg style="left:284px;top:98px" width="18" height="18"><path d="M2,1 v15.5 h14 M4.5,3 v11 h11.5 M7,14 h9" stroke="#3b78bd" stroke-width="1.3" fill="none"/><path d="M7,12 L15,4 L17,6 L9,14Z" fill="#f5c030" stroke="#333" stroke-width="0.9"/></svg>
<svg style="left:309px;top:98px" width="18" height="18"><path d="M2,5 L6,1.5 L10,5 L6,9Z" fill="#666" stroke="#333"/><path d="M7.5,7 L16,15.5" stroke="#a88070" stroke-width="2.5"/></svg>
<!-- Modify panel big icons -->
<svg style="left:352px;top:48px" width="32" height="32"><path d="M1.5,1 v30" stroke="#222" stroke-width="1.3"/><rect x="4.5" y="3.5" width="10" height="9" fill="#b8d4ec" stroke="#3b78bd" stroke-width="1.2"/><rect x="4.5" y="15.5" width="26" height="13" rx="1" fill="#eee" stroke="#333" stroke-width="1.2"/></svg>
<svg style="left:392px;top:50px" width="32" height="28"><path d="M29.3,13.1 L21.4,13.1 L21.4,5.7 Q21.4,2.7 18.2,2.7 L8.7,2.7 Q5.5,2.7 5.5,5.7 L5.5,13.1 L3,13.1 Q0.7,13.1 0.7,19.4 Q0.7,25.8 3,25.8 L29.3,25.8 M29.3,16.6 L17.9,16.6 L17.9,7.5 Q17.9,6.2 16.5,6.2 L10.4,6.2 Q9,6.2 9,7.5 L9,16.6 L4.5,16.6 Q4,16.6 4,19.5 Q4,22.3 4.5,22.3 L29.3,22.3" fill="none" stroke="#3b78bd" stroke-width="1.3"/></svg>
<svg style="left:431px;top:48px" width="32" height="32"><path d="M1.5,4 L7,4 L10,8 L10,16 L7,18 L7,28 L1.5,28Z" fill="#eee" stroke="#333" stroke-width="1.2"/><path d="M14,1 v30" stroke="#38a040" stroke-width="1.3"/><path d="M17,28 L17,10 L26,4 L26,28Z" fill="#d4e4f2" stroke="#9ab" stroke-width="1"/><path d="M15,14 L15,26 L18,23 L21,29 L23,28 L20,22 L24,22Z" fill="#fff" stroke="#444" stroke-width="1"/></svg>
<svg style="left:470px;top:48px" width="32" height="32"><path d="M1.5,4 L7,4 L10,8 L10,16 L7,18 L7,28 L1.5,28Z" fill="#eee" stroke="#333" stroke-width="1.2"/><path d="M14,1 v30" stroke="#3b78bd" stroke-width="1.5"/><path d="M17,28 L17,10 L26,4 L26,28Z" fill="#d4e4f2" stroke="#9ab" stroke-width="1"/><path d="M15,28 L26,17 L29,20 L18,31Z" fill="#f5c030" stroke="#333" stroke-width="1"/><path d="M26,17 L28,15 L31,18 L29,20Z" fill="#b07050"/></svg>
<svg style="left:352px;top:84px" width="32" height="32"><path d="M16,1 L21,7 L18,7 L18,13 L14,13 L14,7 L11,7Z M16,31 L21,25 L18,25 L18,19 L14,19 L14,25 L11,25Z M1,16 L7,11 L7,14 L13,14 L13,18 L7,18 L7,21Z M31,16 L25,11 L25,14 L19,14 L19,18 L25,18 L25,21Z" fill="#2b2f36"/><rect x="13.5" y="13.5" width="5" height="5" fill="#fff" stroke="#333"/></svg>
<svg style="left:392px;top:84px" width="32" height="32"><circle cx="7" cy="7" r="5.5" fill="#e8e8e8" stroke="#444" stroke-width="1.1"/><path d="M14,5 h6 Q24,5 24,10 M21.5,8 L24,11 L26.5,8" stroke="#111" stroke-width="1.4" fill="none"/><circle cx="19" cy="21" r="5.5" fill="#b8d4ec" stroke="#3b78bd" stroke-width="1.2"/><circle cx="22" cy="24" r="5.5" fill="#b8d4ec" stroke="#3b78bd" stroke-width="1.2"/></svg>
<svg style="left:431px;top:84px" width="32" height="32"><path d="M9,6 A11.5,11.5 0 1 0 19,4.5" fill="none" stroke="#3a3d42" stroke-width="2.2"/><path d="M16,1 L24,5.5 L16,10Z" fill="#3a3d42"/></svg>
<svg style="left:469px;top:84px" width="34" height="32"><path d="M1,8 h17 M1,11 h12 M13,3 h10 M20,1 L23,3 L20,5" stroke="#333" stroke-width="1.2" fill="none"/><path d="M10,10 h14 v20 h-5" fill="none" stroke="#68b0e8" stroke-width="3.5"/><path d="M20,15 v16 M23,15 v16" stroke="#333" stroke-width="1.2"/><path d="M29,29 v-16 M27,16 L29,13 L31,16" stroke="#333" stroke-width="1.2" fill="none"/></svg>
<!-- small modify icons -->
<svg style="left:510px;top:52px" width="17" height="12"><rect x="1.5" y="3.5" width="14" height="5" rx="1.5" fill="#b8d4ec" stroke="#3b78bd" stroke-width="1.3"/><path d="M8.5,0 v12" stroke="#d03030" stroke-width="1" stroke-dasharray="1,1"/></svg>
<svg style="left:535px;top:52px" width="17" height="12"><rect x="1.5" y="3.5" width="5" height="5" fill="#b8d4ec" stroke="#3b78bd" stroke-width="1.3"/><rect x="10.5" y="3.5" width="5" height="5" fill="#b8d4ec" stroke="#3b78bd" stroke-width="1.3"/><path d="M8.5,0 v12" stroke="#d03030" stroke-width="1" stroke-dasharray="1,1"/></svg>
<svg style="left:560px;top:50px" width="18" height="16"><path d="M1,6 h4 M5,3 v6 l3,1.5 h5 l-1,-6 h-4z" fill="#f2f2f2" stroke="#bbb" stroke-width="1.1"/><path d="M11,9 L16,14 M16,9 L11,14" stroke="#bbb" stroke-width="1.5"/></svg>
<svg style="left:510px;top:74px" width="17" height="18"><rect x="1.5" y="1.5" width="5.5" height="5.5" fill="#fff" stroke="#444" stroke-width="1.1"/><rect x="10" y="1.5" width="5.5" height="5.5" fill="#b8d4ec" stroke="#3b78bd" stroke-width="1.2"/><rect x="1.5" y="10.5" width="5.5" height="5.5" fill="#b8d4ec" stroke="#3b78bd" stroke-width="1.2"/><rect x="10" y="10.5" width="5.5" height="5.5" fill="#b8d4ec" stroke="#3b78bd" stroke-width="1.2"/></svg>
<svg style="left:535px;top:74px" width="17" height="18"><rect x="1.5" y="1.5" width="14" height="15" fill="#f0f0f0" stroke="#c8c8c8" stroke-width="1.1"/><rect x="1.5" y="8.5" width="7" height="8" fill="#f6f6f6" stroke="#c8c8c8"/></svg>
<svg style="left:560px;top:76px" width="18" height="14"><path d="M1,7 h5 M6,3 v8 M6,4 h4 l3,-2 v10 l-3,-2 h-4" fill="#fff" stroke="#333" stroke-width="1.1"/></svg>
<svg style="left:510px;top:98px" width="17" height="18"><path d="M1,6 h9 M7,4 L10,6 L7,8 M1,10 h4 M5,12 h5" stroke="#333" stroke-width="1.1" fill="none"/><path d="M6,10 h7" stroke="#68b0e8" stroke-width="2"/><path d="M13,2 v15 M15.5,2 v15" stroke="#333" stroke-width="1.2"/></svg>
<svg style="left:535px;top:98px" width="17" height="18"><path d="M1,4 h9 M7,2 L10,4 L7,6 M1,8 h5 M1,12 h5 M1,16 h5" stroke="#333" stroke-width="1.1" fill="none"/><path d="M6,8 h7 M6,12 h7" stroke="#68b0e8" stroke-width="1.8"/><path d="M13,1 v16 M15.5,1 v16" stroke="#333" stroke-width="1.2"/></svg>
<svg style="left:561px;top:99px" width="16" height="16"><path d="M2.5,2.5 L13.5,13.5 M13.5,2.5 L2.5,13.5" stroke="#e02828" stroke-width="3"/></svg>
<!-- View panel -->
<svg style="left:591px;top:61px" width="16" height="20"><circle cx="7" cy="7" r="5.8" fill="#c8e0f8" stroke="#3b78bd" stroke-width="1.1"/><rect x="4.5" y="12" width="5" height="5" fill="#666"/></svg>
<svg style="left:611px;top:70px" width="6" height="4"><path d="M0,0 L5,0 L2.5,3Z" fill="#333"/></svg>
<svg style="left:625px;top:61px" width="18" height="17"><path d="M1,8 L6,5 L14,5 L14,14 L6,14 L1,16Z" fill="#eee" stroke="#444" stroke-width="1.1"/><rect x="5" y="8" width="6" height="6" fill="#ddd" stroke="#333"/><circle cx="14" cy="4" r="3" fill="#f8b030"/></svg>
<svg style="left:590px;top:86px" width="18" height="18"><path d="M2,16 Q4,11 8,11 L15,3 L17,5 L10,13 Q9,17 2,16Z" fill="#8a5028"/><path d="M11,7 L15,3 L17,5 L13,9Z" fill="#e0a060"/></svg>
<svg style="left:613px;top:94px" width="6" height="4"><path d="M0,0 L5,0 L2.5,3Z" fill="#333"/></svg>
<svg style="left:625px;top:88px" width="18" height="16"><path d="M1,2 h16 M1,5.5 h16" stroke="#222" stroke-width="1.6"/><path d="M1,9 h16" stroke="#222" stroke-width="1.1" stroke-dasharray="2,1.2"/><path d="M12,9 v5 M9.5,11.5 L12,14.5 L14.5,11.5Z" stroke="#2f6fc0" fill="#2f6fc0" stroke-width="1.6"/></svg>
<!-- Measure panel -->
<svg style="left:655px;top:54px" width="32" height="22"><path d="M1,5 h29 M1,5 L5,2 M1,5 L5,8 M30,5 L26,2 M30,5 L26,8" stroke="#b4b4b4" stroke-width="1.6" fill="none"/><rect x="1.5" y="12.5" width="28" height="5" rx="1" fill="#d8d8d8" stroke="#c0c0c0"/></svg>
<svg style="left:692px;top:63px" width="6" height="4"><path d="M0,0 L5,0 L2.5,3Z" fill="#555"/></svg>
<svg style="left:655px;top:85px" width="33" height="32"><path d="M2,20 L23,1.5" stroke="#222" stroke-width="1.5"/><path d="M2,30 h29" stroke="#222" stroke-width="1.6"/><path d="M18,5 Q25,15 24,29" stroke="#222" stroke-width="1.3" fill="none"/><path d="M18,5 L22,6 M18,5 L18.5,9 M24,29 L21.5,25.5 M24,29 L26,25.5" stroke="#222" stroke-width="1.2"/></svg>
<svg style="left:692px;top:100px" width="6" height="4"><path d="M0,0 L5,0 L2.5,3Z" fill="#555"/></svg>
<!-- Create panel -->
<svg style="left:711px;top:49px" width="32" height="32"><path d="M4,1.5 h-2.5 v29 h2.5 M28,1.5 h2.5 v29 h-2.5" stroke="#c8c8c8" stroke-width="1.3" fill="none"/><path d="M7,7 L10,4 L17,4 L17,15 L14,18 L7,18Z M7,18 L14,18 L14,27 L7,27Z M14,18 L17,15 L25,15 L25,24 L22,27 L14,27" fill="#efefef" stroke="#c0c0c0" stroke-width="1.1"/></svg>
<svg style="left:748px;top:49px" width="33" height="32"><path d="M4,1.5 h-2.5 v29 h2.5 M28,1.5 h2.5 v29 h-2.5" stroke="#333" stroke-width="1.3" fill="none"/><circle cx="12" cy="11" r="7" fill="#e4e4e4" stroke="#444" stroke-width="1.1"/><path d="M13,14 L16,11 L26,11 L26,22 L23,25 L13,25Z" fill="#eee" stroke="#444" stroke-width="1.1"/><circle cx="25" cy="5" r="4" fill="#f89820"/><circle cx="25" cy="5" r="2" fill="#ffe070"/></svg>
<svg style="left:710px;top:84px" width="34" height="33"><path d="M2,12 L18,18 L18,31 L2,25Z" fill="#f2f2f2" stroke="#c4c4c4" stroke-width="1.1"/><path d="M18,18 L22,16 L22,29 L18,31" fill="#e8e8e8" stroke="#c4c4c4" stroke-width="1.1"/><path d="M5,9 L21,15 M8,6 L24,12 L24,26 M11,3 L27,9 L27,24 L22,27" fill="none" stroke="#c4c4c4" stroke-width="1.1"/><path d="M2,12 L11,3" stroke="#c4c4c4"/></svg>
<svg style="left:748px;top:85px" width="33" height="32"><rect x="1.5" y="1.5" width="6" height="6" fill="#eee" stroke="#222" stroke-width="1.1"/><path d="M10,4.5 h10 M17,2 L20,4.5 L17,7" stroke="#111" stroke-width="1.4" fill="none"/><rect x="23.5" y="1.5" width="7" height="6" fill="#b8d4ec" stroke="#3b78bd" stroke-width="1.2"/><path d="M4.5,10 v9 M2,16.5 L4.5,19.5 L7,16.5 M11,10 L18,17 M14.5,17.5 L18,17 L17.5,13.5" stroke="#111" stroke-width="1.4" fill="none"/><rect x="1.5" y="22.5" width="11" height="7" fill="#b8d4ec" stroke="#3b78bd" stroke-width="1.2"/><path d="M24,19 L29,24 L24,29 L19,24Z" fill="#b8d4ec" stroke="#3b78bd" stroke-width="1.2"/></svg>
<!-- Model by face -->
<svg style="left:798px;top:46px" width="92" height="38"><g transform="translate(0,0)"><path d="M6.2,4.2 Q16,9.5 26.4,10.4 L26.4,30.3 Q15,29 6.2,23.6 Z" fill="#a8d8f8" stroke="#1f5fa8" stroke-width="1.3"/><path d="M6.2,4.2 L32.5,4.2 L26.4,10.4 M32.5,4.2 L32.5,24.1 L26.4,30.3" fill="none" stroke="#333" stroke-width="1.2"/><path d="M6.2,4.2 L32.5,4.2 L26.4,10.4 Q16,9.5 6.2,4.2Z" fill="#fff"/><path d="M6.2,4.2 L32.5,4.2 L26.4,10.4 M32.5,4.2 L32.5,24.1" fill="none" stroke="#333" stroke-width="1.2"/><path d="M6.2,4.2 Q16,9.5 26.4,10.4 M9.8,6.2 L9.8,26.2 M14.8,8.2 L14.8,28 M20.5,9.6 L20.5,29.4 M6.2,11 Q16,15.5 26.4,16.4 M6.2,17.2 Q16,21.5 26.4,22.6" fill="none" stroke="#1f5fa8" stroke-width="1.1"/></g><path d="M27.2,33.6 L34.8,26.1" stroke="#222" stroke-width="1"/><path d="M25,26.9 h6 M28,23.9 v6" stroke="#1a9a20" stroke-width="2.2"/><path d="M31.4,32.8 h4.5" stroke="#b01010" stroke-width="2"/><g transform="translate(54,0)"><path d="M6.2,4.2 Q16,9.5 26.4,10.4 L26.4,30.3 Q15,29 6.2,23.6 Z" fill="#efefef" stroke="#c4c4c4" stroke-width="1.3"/><path d="M6.2,4.2 L32.5,4.2 L26.4,10.4 M32.5,4.2 L32.5,24.1 L26.4,30.3" fill="none" stroke="#c4c4c4" stroke-width="1.2"/><path d="M6.2,4.2 L32.5,4.2 L26.4,10.4 Q16,9.5 6.2,4.2Z" fill="#fff"/><path d="M6.2,4.2 L32.5,4.2 L26.4,10.4 M32.5,4.2 L32.5,24.1" fill="none" stroke="#c4c4c4" stroke-width="1.2"/><path d="M6.2,4.2 Q16,9.5 26.4,10.4 M9.8,6.2 L9.8,26.2 M14.8,8.2 L14.8,28 M20.5,9.6 L20.5,29.4 M6.2,11 Q16,15.5 26.4,16.4 M6.2,17.2 Q16,21.5 26.4,22.6" fill="none" stroke="#c4c4c4" stroke-width="1.1"/></g><path d="M80,26 A4.5,4.5 0 0 0 72,27 M73,31 A4.5,4.5 0 0 0 81,30" fill="none" stroke="#bdbdbd" stroke-width="2"/><path d="M82,23 L82,27.5 L77.5,26.5Z M71,34 L71,29.5 L75.5,30.5Z" fill="#bdbdbd"/></svg>

<!-- ===== view control bar icons ===== -->
<svg style="left:81px;top:1358px" width="17" height="12"><rect x="0.5" y="0.5" width="15" height="11" fill="#fff" stroke="#333"/><path d="M2,2h2v2h-2zM6,2h2v2h-2zM10,2h2v2h-2zM4,4h2v2h-2zM8,4h2v2h-2zM12,4h2v2h-2zM2,6h2v2h-2zM6,6h2v2h-2zM10,6h2v2h-2zM4,8h2v2h-2zM8,8h2v2h-2zM12,8h2v2h-2z" fill="#777"/></svg>
<svg style="left:103px;top:1358px" width="16" height="12"><path d="M1,5 L4,1.5 L15,1.5 L15,8 L12,11 L1,11Z" fill="#b8d8f0" stroke="#2c66b0" stroke-width="1.1"/><path d="M1,5 L12,5 L15,1.5 M12,5 v6" stroke="#2c66b0" stroke-width="1" fill="none"/></svg>
<svg style="left:122px;top:1357px" width="16" height="14"><circle cx="6" cy="6" r="3.5" fill="#f8e070" stroke="#c8a020"/><path d="M6,0.5v2M6,9.5v2M0.5,6h2M9.5,6h2M2,2l1.4,1.4M8.6,8.6L10,10M2,10l1.4-1.4M8.6,3.4L10,2" stroke="#d8a820" stroke-width="1"/><path d="M9,8 L14,13 M14,8 L9,13" stroke="#e02020" stroke-width="2"/></svg>
<svg style="left:144px;top:1357px" width="16" height="14"><circle cx="6" cy="5" r="4" fill="#fff" stroke="#2c66b0" stroke-width="1.1"/><path d="M1,12 h6" stroke="#333" stroke-width="1.5"/><path d="M9,8 L14,13 M14,8 L9,13" stroke="#e02020" stroke-width="2"/></svg>
<svg style="left:164px;top:1357px" width="17" height="14"><path d="M1,3 L7,1 L11,4 L9,10 L4,10Z" fill="#f0f0f0" stroke="#555"/><circle cx="12" cy="8" r="3" fill="#d8ecfa" stroke="#2c66b0"/><rect x="10.5" y="11" width="3" height="2" fill="#2c66b0"/></svg>
<svg style="left:185px;top:1357px" width="17" height="14"><path d="M1,8 h3 M4,4 v9 M4,4 h10 v7" stroke="#2c66b0" stroke-width="1.3" fill="none" stroke-dasharray="2,1"/><path d="M9,7 L15,13 M15,7 L9,13" stroke="#e02020" stroke-width="2"/></svg>
<svg style="left:206px;top:1357px" width="17" height="14"><path d="M1,8 h3 M4,4 v9 M4,4 h8" stroke="#2c66b0" stroke-width="1.3" fill="none" stroke-dasharray="2,1"/><circle cx="12" cy="7" r="3" fill="#d8ecfa" stroke="#2c66b0"/><rect x="10.5" y="10" width="3" height="2.5" fill="#2c66b0"/></svg>
<svg style="left:227px;top:1356px" width="16" height="15"><path d="M1,7 L7,1.5 L13,7 L13,14 L1,14Z" fill="#f4f4f4" stroke="#444" stroke-width="1.1"/><rect x="8.5" y="9" width="6" height="5" fill="#c8e8c8" stroke="#338833"/></svg>
<svg style="left:248px;top:1357px" width="17" height="13"><rect x="0.5" y="0.5" width="15" height="11" fill="#d8ecfa" stroke="#2c66b0"/><path d="M3,6 Q8,2 13,6 Q8,10 3,6Z" fill="#555"/></svg>
<svg style="left:273px;top:1360px" width="7" height="10"><circle cx="3.5" cy="3.5" r="3" fill="#d8ecfa" stroke="#2c66b0"/><rect x="2" y="7" width="3" height="2" fill="#2c66b0"/></svg>
<svg style="left:290px;top:1357px" width="14" height="14"><path d="M2,7 L6,3 L10,7 L6,11Z" fill="#b8d8f0" stroke="#2c66b0"/><path d="M7,3 L10,1 L12,3" stroke="#338833" stroke-width="1.5" fill="none"/><path d="M8,8 L13,13 M13,8 L8,13" stroke="#e02020" stroke-width="2"/></svg>
<svg style="left:311px;top:1357px" width="16" height="14"><rect x="1" y="2" width="12" height="10" fill="#fff" stroke="#222" stroke-width="1.2"/><circle cx="10" cy="8" r="3" fill="#fff" stroke="#222"/><path d="M3,1v2M6,1v2M9,1v2M3,11v2M6,11v2" stroke="#222"/></svg>
<svg style="left:332px;top:1357px" width="17" height="14"><path d="M1,13 v-9 l4,-3 h6 v12 M3,4v9 M6,4v9 M9,4v9" stroke="#a83030" stroke-width="1" fill="none"/><circle cx="13" cy="6" r="3" fill="#f8d040"/></svg>
<svg style="left:353px;top:1357px" width="16" height="13"><path d="M1,4 L4,1 L14,1 L14,9 L11,12 L1,12Z" fill="#eee" stroke="#555"/><path d="M1,4 h10 l3,-3 M11,4 v8" stroke="#555" fill="none"/></svg>
<svg style="left:378px;top:1361px" width="5" height="8"><path d="M4,0 L0,4 L4,8Z" fill="#333"/></svg>

<!-- ===== taskbar icons ===== -->
<svg style="left:6px;top:1400px" width="44" height="40"><defs><radialGradient id="orb" cx="50%" cy="35%" r="60%"><stop offset="0" stop-color="#6aa8d8"/><stop offset=".6" stop-color="#1f5a8c"/><stop offset="1" stop-color="#0e2c48"/></radialGradient></defs><circle cx="21" cy="20" r="18" fill="url(#orb)" stroke="#0c2036" stroke-width="1"/><path d="M12,11 Q16,9 20,11 L19,19 Q15,17 11,19Z" fill="#f0582a"/><path d="M21,11 Q25,13 30,11 L29,19 Q25,21 20,19Z" fill="#7cc03a"/><path d="M11,20 Q15,18 19,20 L18,28 Q14,26 10,28Z" fill="#2a9ae0"/><path d="M20,20 Q24,22 29,20 L28,28 Q24,30 19,28Z" fill="#f8c020"/><ellipse cx="21" cy="11" rx="13" ry="7" fill="rgba(255,255,255,.22)"/></svg>
<svg style="left:72px;top:1407px" width="36" height="30"><path d="M2,4 L12,4 L14,7 L30,7 L30,25 L2,25Z" fill="#f0d888" stroke="#c8a040"/><rect x="6" y="3" width="3" height="2" fill="#38b038"/><rect x="12" y="5" width="3" height="2" fill="#e03030"/><rect x="20" y="6" width="3" height="2" fill="#3080e0"/><path d="M2,10 L30,10 L30,25 L2,25Z" fill="#f8e8a8" stroke="#d0a848"/><path d="M8,27 L8,17 L24,17 L24,27 M11,27 L11,20 L21,20 L21,27" fill="none" stroke="#8cc8f0" stroke-width="2"/></svg>
<svg style="left:135px;top:1407px" width="30" height="28"><rect x="4" y="2" width="22" height="24" fill="#9cc8ec" stroke="#6a98c8"/><rect x="2" y="3" width="20" height="22" fill="#7ab0e0" stroke="#5a88c0"/><circle cx="12" cy="14" r="8" fill="#f08020"/><path d="M9,9.5 L16.5,14 L9,18.5Z" fill="#fff"/></svg>
<svg style="left:195px;top:1402px" width="36" height="36"><defs><linearGradient id="ieg" x1="0" y1="0" x2="0" y2="1"><stop offset="0" stop-color="#7ad8f8"/><stop offset="1" stop-color="#2a9ee0"/></linearGradient></defs><path d="M29,20 A10.5,10.5 0 1 0 26.5,27" fill="none" stroke="url(#ieg)" stroke-width="5.5"/><rect x="9" y="17" width="20" height="4.5" fill="#46b8ee"/><path d="M5,31 Q1,27 9,15 Q20,2 30,4 Q35,6 31,12" fill="none" stroke="#f2c21c" stroke-width="2.6"/></svg>
<svg style="left:258px;top:1403px" width="34" height="35"><defs><linearGradient id="rv" x1="0" y1="1" x2="1" y2="0"><stop offset="0" stop-color="#2450b0"/><stop offset=".45" stop-color="#5a84d0"/><stop offset="1" stop-color="#f6f8fc"/></linearGradient></defs><rect x="1" y="3" width="31" height="31" fill="url(#rv)"/><path d="M10.5,9 L17,5.5 L22.5,12 L21.5,16.5 L19,18.5 L26.5,25.5 L25.5,27 L16,22.5 L14.5,28 L9,27.5 Z" fill="#0e2a7c"/></svg>
<!-- properties corner icon -->
<svg style="left:1620px;top:1380px" width="18" height="18"><path d="M2,6 L6,4 L10,6 L10,15 L6,17 L2,15Z" fill="#5aa0e0" stroke="#2c66b0"/><path d="M6,3 L9,1 L12,3 L12,8 L9,9" fill="#88c868" stroke="#3c9040"/><path d="M13,7 v10 M16,7 v10 M12.5,7 h4" stroke="#2c66b0" stroke-width="1.3"/></svg>

<!-- ===== properties palette ===== -->
<div class="a" style="left:1284px;top:106px;width:338px;height:1283px;background:#f7f7f7;border:1px solid #d8d8d8;border-right:2px solid #6e6e6e;border-bottom:2px solid #8a8a8a"></div>
<div class="a" style="left:1288px;top:110px;width:330px;height:19px;background:#95b0d1"></div>
<div class="t" style="left:1290px;top:114px;font-weight:bold;font-size:11.4px;color:#0c0c0c">Properties</div>
<svg style="left:1605px;top:113px" width="10" height="10"><path d="M1,1 L9,9 M9,1 L1,9" stroke="#111" stroke-width="2"/></svg>
<div class="a" style="left:1288px;top:129px;width:329px;height:1256px;background:#eeeeee;border-left:2px solid #6a6a6a;border-top:2px solid #5e5e5e;border-right:1px solid #c4c4c4"></div>
<div class="a" style="left:1290px;top:131px;width:325px;height:72px;background:linear-gradient(#fdfdfd,#ececee)"></div>
<div class="a" style="left:1293px;top:133px;width:66px;height:66px;background:linear-gradient(#fbfbfb,#efeff1);border:1px solid #cfcfcf"></div>
<div class="t" style="left:1363px;top:161px;font-size:11.7px;color:#333">Curtain System</div>
<svg style="left:1606px;top:165px" width="8" height="5"><path d="M0,0 L8,0 L4,4.5Z" fill="#444"/></svg>
<div class="a" style="left:1290px;top:203px;width:325px;height:24px;background:#eeeeee"></div>
<div class="a" style="left:1291px;top:204px;width:242px;height:21px;background:linear-gradient(#f6f6f6,#e6e6e6 55%,#d6d6d6);border:1px solid #8c8c8c;border-radius:3px"></div>
<div class="t" style="left:1294px;top:209px;font-size:11.5px;color:#111">Curtain Systems (1)</div>
<svg style="left:1520px;top:212px" width="9" height="6"><path d="M0,0 L9,0 L4.5,5Z" fill="#111"/></svg>
<svg style="left:1538px;top:205px" width="18" height="17"><rect x="0.5" y="0.5" width="7" height="7" fill="#fff" stroke="#555"/><rect x="0.5" y="8.5" width="7" height="7" fill="#fff" stroke="#555"/><rect x="8.5" y="0.5" width="7" height="7" fill="#fff" stroke="#777"/><rect x="9.5" y="6.5" width="7" height="10" fill="#fff" stroke="#3b4a63"/><rect x="11" y="9" width="4" height="2" fill="#3b5a8a"/></svg>
<div class="t" style="left:1560px;top:207px;font-size:11.7px;color:#111">Edit Type</div>
<div class="a" style="left:1290px;top:227px;width:325px;height:1131px;background:#fff"></div>
<div class="a" style="left:1290px;top:1358px;width:325px;height:27px;background:#eeeeee"></div>
<div class="hdr" style="top:227px"></div>
<div class="t" id="h227" style="left:1294px;top:230.5px;font-size:11.9px;color:#141414">Constraints</div>
<svg style="left:1603px;top:232px" width="7" height="9"><path d="M0.8,4 L3.5,1.2 L6.2,4 M0.8,8 L3.5,5.2 L6.2,8" fill="none" stroke="#111" stroke-width="1.4"/></svg>
<div class="row" style="top:245px"></div>
<div class="cv" style="top:245px"></div>
<div class="t" style="left:1300px;top:247px;font-size:12.2px;color:#141414">Room Bounding</div>
<div class="row" style="top:263px"></div>
<div class="cv" style="top:263px"></div>
<div class="t" style="left:1300px;top:265px;font-size:11.6px;color:#8c8c8c">Related to Mass</div>
<div class="hdr" style="top:281px"></div>
<div class="t" id="h281" style="left:1294px;top:284.5px;font-size:11.3px;color:#141414">Grid 1</div>
<svg style="left:1603px;top:286px" width="7" height="9"><path d="M0.8,4 L3.5,1.2 L6.2,4 M0.8,8 L3.5,5.2 L6.2,8" fill="none" stroke="#111" stroke-width="1.4"/></svg>
<div class="row" style="top:299px"></div>
<div class="cv" style="top:299px"></div>
<div class="t" style="left:1300px;top:301px;font-size:12.2px;color:#8c8c8c">Number</div>
<div class="t" style="left:1457px;top:301px;font-size:11.8px;color:#8c8c8c">4</div>
<div class="row" style="top:317px"></div>
<div class="cv" style="top:317px"></div>
<div class="t" style="left:1300px;top:319px;font-size:12.0px;color:#141414">Justification</div>
<div class="t" style="left:1457px;top:319px;font-size:11.8px;color:#141414">Beginning</div>
<div class="row" style="top:335px"></div>
<div class="cv" style="top:335px"></div>
<div class="t" style="left:1300px;top:338px;font-size:11.9px;color:#141414">Angle</div>
<div class="t" style="left:1457px;top:337px;font-size:11.8px;color:#141414">10.520°</div>
<div class="row" style="top:353px"></div>
<div class="cv" style="top:353px"></div>
<div class="t" style="left:1300px;top:356px;font-size:11.9px;color:#141414">Offset</div>
<div class="t" style="left:1457px;top:355px;font-size:11.8px;color:#141414">0.0</div>
<div class="hdr" style="top:371px"></div>
<div class="t" id="h371" style="left:1294px;top:374.5px;font-size:11.3px;color:#141414">Grid 2</div>
<svg style="left:1603px;top:376px" width="7" height="9"><path d="M0.8,4 L3.5,1.2 L6.2,4 M0.8,8 L3.5,5.2 L6.2,8" fill="none" stroke="#111" stroke-width="1.4"/></svg>
<div class="row" style="top:389px"></div>
<div class="cv" style="top:389px"></div>
<div class="t" style="left:1300px;top:391px;font-size:12.2px;color:#8c8c8c">Number</div>
<div class="t" style="left:1457px;top:391px;font-size:11.8px;color:#8c8c8c">1</div>
<div class="row" style="top:407px"></div>
<div class="cv" style="top:407px"></div>
<div class="t" style="left:1300px;top:409px;font-size:12.0px;color:#8c8c8c">Justification</div>
<div class="t" style="left:1457px;top:409px;font-size:11.8px;color:#8c8c8c">Beginning</div>
<div class="row" style="top:425px"></div>
<div class="cv" style="top:425px"></div>
<div class="t" style="left:1300px;top:428px;font-size:11.9px;color:#141414">Angle</div>
<div class="t" style="left:1457px;top:427px;font-size:11.8px;color:#141414">10.517°</div>
<div class="row" style="top:443px"></div>
<div class="cv" style="top:443px"></div>
<div class="t" style="left:1300px;top:446px;font-size:11.9px;color:#141414">Offset</div>
<div class="t" style="left:1457px;top:445px;font-size:11.8px;color:#141414">0.0</div>
<div class="hdr" style="top:461px"></div>
<div class="t" id="h461" style="left:1294px;top:464.5px;font-size:12.0px;color:#141414">Identity Data</div>
<svg style="left:1603px;top:466px" width="7" height="9"><path d="M0.8,4 L3.5,1.2 L6.2,4 M0.8,8 L3.5,5.2 L6.2,8" fill="none" stroke="#111" stroke-width="1.4"/></svg>
<div class="row" style="top:479px"></div>
<div class="cv" style="top:479px"></div>
<div class="t" style="left:1300px;top:481px;font-size:12.1px;color:#141414">Comments</div>
<div class="row" style="top:497px"></div>
<div class="cv" style="top:497px"></div>
<div class="t" style="left:1300px;top:499px;font-size:12.1px;color:#141414">Mark</div>
<div class="row" style="top:515px"></div>
<div class="cv" style="top:515px"></div>
<div class="t" style="left:1300px;top:517px;font-size:11.8px;color:#141414">Workset</div>
<div class="t" style="left:1457px;top:517px;font-size:11.8px;color:#141414">Roof and Brise Soleil</div>
<div class="row" style="top:533px"></div>
<div class="cv" style="top:533px"></div>
<div class="t" style="left:1300px;top:536px;font-size:11.9px;color:#8c8c8c">Edited by</div>
<div class="t" style="left:1457px;top:535px;font-size:11.8px;color:#8c8c8c">PC4</div>
<div class="hdr" style="top:551px"></div>
<div class="t" id="h551" style="left:1294px;top:554.5px;font-size:11.9px;color:#141414">Phasing</div>
<svg style="left:1603px;top:556px" width="7" height="9"><path d="M0.8,4 L3.5,1.2 L6.2,4 M0.8,8 L3.5,5.2 L6.2,8" fill="none" stroke="#111" stroke-width="1.4"/></svg>
<div class="row" style="top:569px"></div>
<div class="cv" style="top:569px"></div>
<div class="t" style="left:1300px;top:571px;font-size:11.5px;color:#141414">Phase Created</div>
<div class="t" style="left:1457px;top:571px;font-size:11.8px;color:#141414">New Construction</div>
<div class="row" style="top:587px"></div>
<div class="cv" style="top:587px"></div>
<div class="t" style="left:1300px;top:588px;font-size:11.7px;color:#141414">Phase Demolished</div>
<div class="t" style="left:1457px;top:589px;font-size:11.8px;color:#141414">None</div>
<div class="a" style="left:1615px;top:245px;width:1px;height:360px;border-left:1px dotted #7a7a7a"></div>
<div class="a" style="left:1453px;top:245px;width:163px;height:18px;border:2px solid #111"></div>
<svg style="left:1456px;top:248px" width="13" height="13"><rect x="0.5" y="0.5" width="12" height="12" fill="#e6e9ef" stroke="#8a8f99"/><path d="M3,6.5 L5.5,10 L10,2.5" fill="none" stroke="#2d3d90" stroke-width="1.8"/></svg>
<svg style="left:1456px;top:266px" width="13" height="13"><rect x="0.5" y="0.5" width="12" height="12" fill="#f1f1f1" stroke="#c4c4c4"/><path d="M3,6.5 L5.5,10 L10,2.5" fill="none" stroke="#c4c4c4" stroke-width="1.6"/></svg>
<div class="t" style="left:1292px;top:1366px;font-size:11.9px;color:#1f5cab;text-decoration:underline">Properties help</div>
<div class="a" style="left:1541px;top:1361px;width:73px;height:21px;background:#efefef;border:1px solid #b9b9b9;border-radius:3px"></div>
<div class="t" style="left:1562px;top:1366px;font-size:12.1px;color:#9a9a9a">Apply</div>
</body></html>
